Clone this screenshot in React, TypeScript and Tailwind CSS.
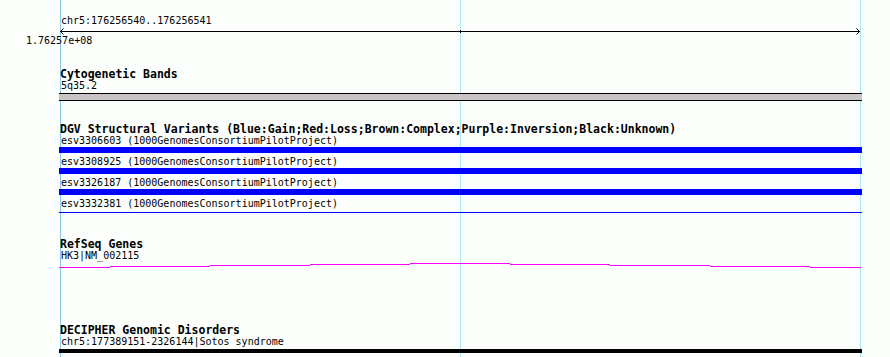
const variants = ["esv3306603", "esv3308925", "esv3326187", "esv3332381"];

// step heights of the refseq gene line, one per 100px column
const geneSteps = [
  { x1: 0, x2: 51, y: 4 },
  { x1: 51, x2: 151, y: 3 },
  { x1: 151, x2: 251, y: 2 },
  { x1: 251, x2: 351, y: 1 },
  { x1: 351, x2: 451, y: 0 },
  { x1: 451, x2: 551, y: 1 },
  { x1: 551, x2: 651, y: 2 },
  { x1: 651, x2: 751, y: 3 },
  { x1: 751, x2: 802, y: 4 },
];

function TrackTitle({ children }: { children: React.ReactNode }) {
  return (
    <div className="h-[12px] pl-px text-[11.5px] leading-[12px] font-bold whitespace-nowrap">
      {children}
    </div>
  );
}

function Label({ children }: { children: React.ReactNode }) {
  return (
    <div className="h-[12px] pl-[2px] text-[10px] leading-[12px] whitespace-nowrap">
      {children}
    </div>
  );
}

export default function App() {
  return (
    <div className="relative w-[890px] h-[357px] overflow-hidden bg-[#fcfefc] text-black font-['DejaVu_Sans_Mono',monospace]">
      <div className="absolute top-0 bottom-0 left-[60px] w-px bg-[#88c8f0]" />
      <div className="absolute top-0 bottom-0 left-[460px] w-px bg-[#a8eaf2]" />
      <div className="absolute top-0 bottom-0 left-[860px] w-px bg-[#a8eaf2]" />

      <div className="relative ml-[59px] w-[803px] pt-[15px]">
        <Label>chr5:176256540..176256541</Label>
        <svg width="803" height="8" className="block">
          <line x1="1" y1="4.5" x2="801" y2="4.5" stroke="black" strokeWidth="1" />
          <path d="M4.5 1.5 L1.5 4.5 L4.5 7.5" fill="none" stroke="black" strokeWidth="1" />
          <path d="M797.5 1.5 L800.5 4.5 L797.5 7.5" fill="none" stroke="black" strokeWidth="1" />
          <line x1="401.5" y1="3" x2="401.5" y2="6" stroke="black" strokeWidth="1" />
        </svg>
        <div className="-ml-[33px] h-[12px] text-[10px] leading-[12px]">1.76257e+08</div>

        <div className="mt-[21px]">
          <TrackTitle>Cytogenetic Bands</TrackTitle>
          <Label>5q35.2</Label>
          <div className="mt-[1px] h-[8px] border-y border-black bg-[#c8c4c8]" />
        </div>

        <div className="mt-[22px]">
          <TrackTitle>DGV Structural Variants (Blue:Gain;Red:Loss;Brown:Complex;Purple:Inversion;Black:Unknown)</TrackTitle>
          {variants.map((id, i) => (
            <div key={id} className={i === 0 ? "" : "mt-[3px]"}>
              <Label>{id} (1000GenomesConsortiumPilotProject)</Label>
              {i < 3 ? (
                <div className="h-[6px] bg-[#0000ff]" />
              ) : (
                <div className="mt-[2px] h-px bg-[#0000ff]" />
              )}
            </div>
          ))}
        </div>

        <div className="mt-[25px]">
          <TrackTitle>RefSeq Genes</TrackTitle>
          <Label>HK3|NM_002115</Label>
          <svg width="803" height="5" className="block mt-[1px]">
            {geneSteps.map((s) => (
              <line key={s.x1} x1={s.x1} y1={s.y + 0.5} x2={s.x2} y2={s.y + 0.5} stroke="#ff00ff" strokeWidth="1" />
            ))}
          </svg>
        </div>

        <div className="mt-[56px]">
          <TrackTitle>DECIPHER Genomic Disorders</TrackTitle>
          <Label>chr5:177389151-2326144|Sotos syndrome</Label>
          <div className="mt-[1px] h-[4px] bg-black" />
        </div>
      </div>
    </div>
  );
}
